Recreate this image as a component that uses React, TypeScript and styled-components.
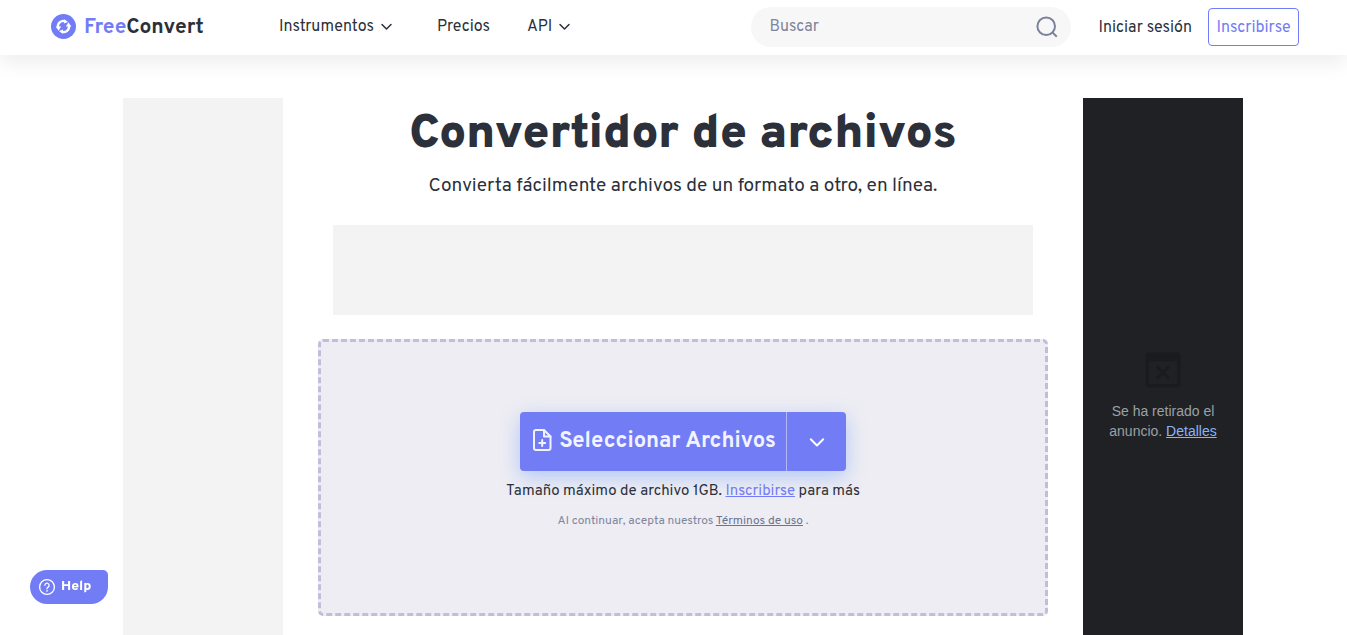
import React from "react";
import styled, { createGlobalStyle } from "styled-components";

const GlobalStyle = createGlobalStyle`
  * { box-sizing: border-box; }
  body {
    margin: 0;
    background: #fff;
    color: #2b303b;
    font-family: Overpass, Roboto, "Liberation Sans", sans-serif;
    font-size: 16px;
    line-height: 24px;
  }
  button, input { font: inherit; }
`;

const Page = styled.div`
  display: flex;
  flex-direction: column;
  min-height: 100vh;
`;

const Header = styled.header`
  display: flex;
  align-items: center;
  height: 55px;
  padding: 0 48px 2px 51px;
  background: #fff;
  box-shadow: 0 8px 20px rgba(0, 0, 0, 0.07);
`;

const Logo = styled.a`
  display: flex;
  align-items: center;
  gap: 8px;
  width: 228px;
  color: #2b303b;
  font-size: 21px;
  font-weight: 700;
  text-decoration: none;

  span { padding-top: 3px; }

  em {
    color: #727cf5;
    font-style: normal;
  }
`;

const Nav = styled.nav`
  display: flex;
  flex: 1;
  gap: 37px;
`;

const NavButton = styled.button`
  display: flex;
  align-items: center;
  gap: 6px;
  padding: 0 7px 0 0;
  border: 0;
  background: none;
  color: inherit;
  cursor: pointer;
`;

const NavLink = styled.a`
  color: inherit;
  text-decoration: none;
`;

const Search = styled.form`
  display: flex;
  align-items: center;
  width: 320px;
  height: 40px;
  padding: 0 12px 0 18px;
  border-radius: 20px;
  background: #f7f7f7;
  color: #7c829c;
`;

const SearchInput = styled.input`
  flex: 1;
  min-width: 0;
  padding: 0;
  border: 0;
  outline: 0;
  background: none;
  color: #2b303b;

  &::placeholder {
    color: #7f859c;
    opacity: 1;
  }
`;

const IconButton = styled.button`
  display: flex;
  padding: 0;
  border: 0;
  background: none;
  color: inherit;
  cursor: pointer;
`;

const Account = styled.div`
  display: flex;
  align-items: center;
  gap: 16px;
  margin-left: 27px;

  a { padding-top: 2px; }
`;

const SignUp = styled.a`
  display: flex;
  align-items: center;
  justify-content: center;
  width: 91px;
  height: 38px;
  border: 1px solid #727cf5;
  border-radius: 4px;
  color: #727cf5;
  text-decoration: none;
`;

const Main = styled.main`
  display: flex;
  flex: 1;
  justify-content: center;
  gap: 35px;
  padding: 43px 0 0 19px;
`;

const SideAd = styled.aside<{ $dark?: boolean }>`
  flex: 0 0 160px;
  padding-top: 251px;
  background: ${(p) => (p.$dark ? "#202124" : "#f3f3f3")};
  color: #9aa0a6;
  font-family: "Liberation Sans", Arial, sans-serif;
  font-size: 14px;
  line-height: 20px;
  text-align: center;

  svg {
    display: block;
    margin: 0 auto 10px;
  }

  p { margin: 0 20px; }
  a { color: #8ab4f8; }
`;

const Center = styled.div`
  display: flex;
  flex-direction: column;
  align-items: center;
  flex: 0 1 730px;
  padding-bottom: 19px;
`;

const Title = styled.h1`
  margin: 5px 0 0;
  font-size: 48px;
  font-weight: 900;
  line-height: 64px;
  white-space: nowrap;
`;

const Subtitle = styled.p`
  margin: 7px 0 0;
  font-size: 19px;
  line-height: 24px;
`;

const Banner = styled.div`
  width: 100%;
  max-width: 700px;
  height: 90px;
  margin: 27px 0 24px;
  background: #f3f3f3;
`;

const DropZone = styled.section`
  display: flex;
  flex-direction: column;
  align-items: center;
  width: 100%;
  padding: 70px 0 82px;
  border: 3px dashed #bfbfdc;
  border-radius: 5px;
  background: #eeedf3;
`;

const Picker = styled.div`
  display: flex;
  height: 59px;
  border-radius: 4px;
  background: #727cf5;
  box-shadow: 0 6px 20px rgba(80, 140, 255, 0.38);
`;

const PickButton = styled.button`
  display: flex;
  align-items: center;
  justify-content: center;
  gap: 7px;
  width: 266px;
  padding: 0 0 3px 2px;
  border: 0;
  background: none;
  color: #f3f3ff;
  font-size: 22px;
  font-weight: 700;
  white-space: nowrap;
  cursor: pointer;

  span { padding-top: 3px; }
`;

const SourceButton = styled.button`
  display: flex;
  align-items: center;
  justify-content: center;
  width: 60px;
  padding: 0;
  border: 0;
  border-left: 1px solid #b3b7f8;
  background: none;
  color: #fff;
  cursor: pointer;
`;

const SizeNote = styled.p`
  margin: 9px 0 0;
  font-size: 15px;
  line-height: 24px;

  a { color: #727cf5; }
`;

const Terms = styled.p`
  margin: 7px 0 0;
  color: #7f859c;
  font-size: 12px;
  line-height: 20px;

  a { color: #6c7391; }
`;

const HelpButton = styled.button`
  position: fixed;
  bottom: 31px;
  left: 30px;
  display: flex;
  align-items: center;
  gap: 5px;
  width: 78px;
  height: 34px;
  padding: 0 0 1px 8px;
  border: 0;
  border-radius: 17px 5px 17px 17px;
  background: #727cf5;
  color: #fff;
  font-size: 14px;
  font-weight: 800;
  cursor: pointer;
`;

const Chevron = ({ size = 13, weight = 1.5 }: { size?: number; weight?: number }) => (
  <svg width={size} height={size} viewBox="0 0 13 13" fill="none" stroke="currentColor" strokeWidth={weight} strokeLinecap="round" strokeLinejoin="round" aria-hidden="true">
    <path d="M2 4.500l4.500 4.500L11 4.500" />
  </svg>
);

const LogoMark = () => (
  <svg width="25" height="25" viewBox="0 0 25 25" aria-hidden="true">
    <circle cx="12.5" cy="12.5" r="12.5" fill="#727cf5" />
    <g fill="none" stroke="#fff" strokeWidth="2.4">
      <path d="M7 13.500A5.600 5.600 0 0 1 14.600 7.300" />
      <path d="M18 11.500A5.600 5.600 0 0 1 10.400 17.700" />
    </g>
    <path d="M4.600 12.600h5.600l-2.600 4.200zM20.400 12.400h-5.600l2.600-4.200zM13.300 5.200l3.800 2.900-4.300 1.500zM11.700 19.800l-3.800-2.900 4.300-1.500z" fill="#fff" />
  </svg>
);

const SearchIcon = () => (
  <svg width="24" height="24" viewBox="0 0 24 24" fill="none" stroke="currentColor" strokeWidth="2" aria-hidden="true">
    <circle cx="11.2" cy="11.2" r="8.8" />
    <path d="M17.4 17.4l4.4 4.4" />
  </svg>
);

const FilePlus = () => (
  <svg width="20" height="24" viewBox="0 0 20 24" fill="none" stroke="currentColor" strokeWidth="2" strokeLinecap="round" strokeLinejoin="round" aria-hidden="true">
    <path d="M12 2H4a2 2 0 0 0-2 2v16a2 2 0 0 0 2 2h12.500a2 2 0 0 0 2-2V8.500z" />
    <path d="M12 2v6.500h6.500M10.200 12v6M7.200 15h6" />
  </svg>
);

const RemovedAd = () => (
  <svg width="42" height="42" viewBox="0 0 24 24" fill="#1a1b1e" aria-hidden="true">
    <path fillRule="evenodd" d="M4 2h16a2 2 0 0 1 2 2v16a2 2 0 0 1-2 2H4a2 2 0 0 1-2-2V4a2 2 0 0 1 2-2zm0 5v13h16V7z" />
    <path d="M8.500 10l7 7M15.500 10l-7 7" stroke="#1a1b1e" strokeWidth="1.600" />
  </svg>
);

const HelpIcon = () => (
  <svg width="18" height="18" viewBox="0 0 18 18" fill="none" stroke="currentColor" strokeWidth="1.3" aria-hidden="true">
    <circle cx="9" cy="9" r="7.400" />
    <path d="M6.900 7.300a2.100 2.100 0 1 1 3.200 1.800c-.8.5-1.100.8-1.100 1.700" strokeLinecap="round" />
    <circle cx="9" cy="12.900" r=".8" fill="currentColor" stroke="none" />
  </svg>
);

export default function App() {
  return (
    <Page>
      <GlobalStyle />
      <Header>
        <Logo href="#">
          <LogoMark />
          <span><em>Free</em>Convert</span>
        </Logo>
        <Nav>
          <NavButton type="button">Instrumentos <Chevron /></NavButton>
          <NavLink href="#precios">Precios</NavLink>
          <NavButton type="button">API <Chevron /></NavButton>
        </Nav>
        <Search role="search">
          <SearchInput type="text" placeholder="Buscar" aria-label="Buscar" />
          <IconButton type="button" aria-label="Buscar"><SearchIcon /></IconButton>
        </Search>
        <Account>
          <NavLink href="#login">Iniciar sesión</NavLink>
          <SignUp href="#signup">Inscribirse</SignUp>
        </Account>
      </Header>
      <Main>
        <SideAd />
        <Center>
          <Title>Convertidor de archivos</Title>
          <Subtitle>Convierta fácilmente archivos de un formato a otro, en línea.</Subtitle>
          <Banner />
          <DropZone>
            <Picker>
              <PickButton type="button"><FilePlus /><span>Seleccionar Archivos</span></PickButton>
              <SourceButton type="button" aria-label="Más opciones"><Chevron size={18} weight={1.4} /></SourceButton>
            </Picker>
            <SizeNote>Tamaño máximo de archivo 1GB. <a href="#signup">Inscribirse</a> para más</SizeNote>
            <Terms>Al continuar, acepta nuestros <a href="#terms">Términos de uso</a> .</Terms>
          </DropZone>
        </Center>
        <SideAd $dark>
          <RemovedAd />
          <p>Se ha retirado el anuncio. <a href="#details">Detalles</a></p>
        </SideAd>
      </Main>
      <HelpButton type="button"><HelpIcon />Help</HelpButton>
    </Page>
  );
}
